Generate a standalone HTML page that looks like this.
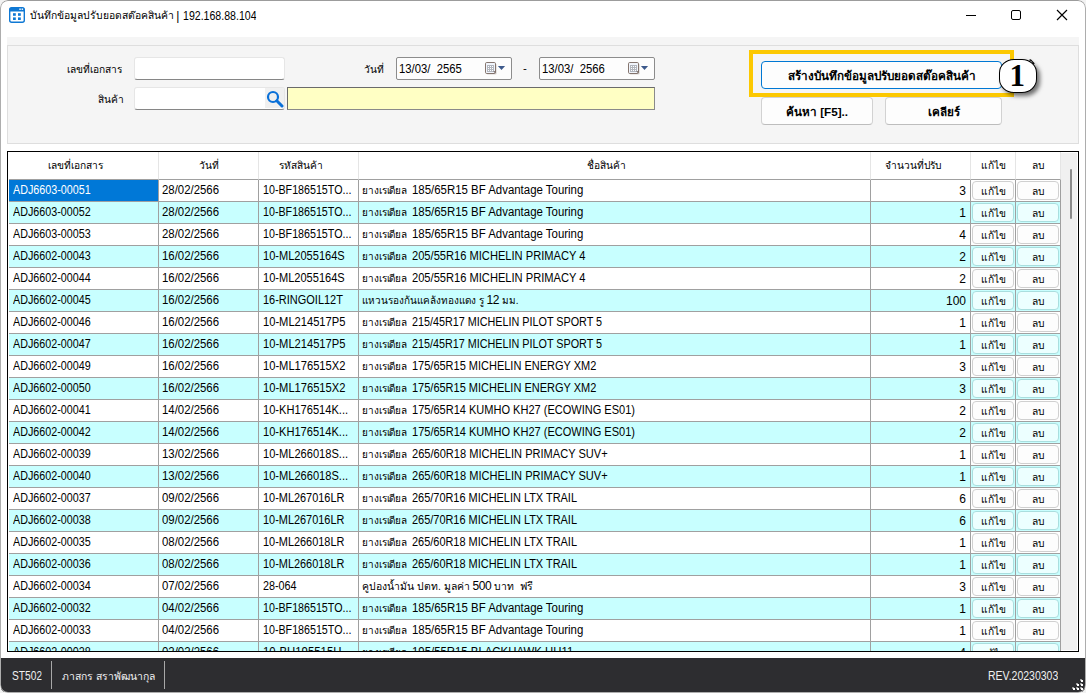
<!DOCTYPE html>
<html lang="th">
<head>
<meta charset="utf-8">
<title>บันทึกข้อมูลปรับยอดสต๊อคสินค้า</title>
<style>
*{box-sizing:border-box;margin:0;padding:0}
html,body{width:1086px;height:693px;overflow:hidden;background:#f2f2f2}
body{font-family:"Liberation Sans",sans-serif;font-size:11.5px;color:#000;position:relative}
.win{position:absolute;left:0;top:0;width:1086px;height:693px;border-radius:8px;background:#fff;overflow:hidden}
.winborder{position:absolute;left:0;top:0;width:1086px;height:693px;border:1px solid #adadad;border-top-color:#9c9c9c;border-radius:8px;pointer-events:none}
.t{position:absolute;white-space:nowrap;line-height:16px;height:16px;overflow:hidden}
.ctl{position:absolute;top:0;left:0}
.panel{position:absolute;left:7px;top:37px;width:1072px;height:107px;background:#f5f5f5}
.gb{position:absolute;left:0;top:8px;width:1072px;height:99px;border:1px solid #dedede}
.lbl{position:absolute;white-space:nowrap;text-align:right;line-height:16px;height:16px;width:70px;overflow:hidden}
.inp{position:absolute;background:#fff;border:1px solid #e6e6e6;border-bottom:1px solid #868686;border-radius:3px}
.dp{position:absolute;background:#fdfdfd;border:1px solid #8c8c8c;border-radius:2px}
.dp span{position:absolute;left:2px;top:3px;line-height:16px;white-space:pre;font-size:12.5px;transform:scaleX(.903);transform-origin:0 50%}
.btn{position:absolute;background:#fdfdfd;border:1px solid #d2d2d2;border-bottom-color:#bdbdbd;border-radius:4px;text-align:center;font-weight:bold;font-size:11.7px;white-space:nowrap;overflow:hidden}
.grid{position:absolute;left:7px;top:151px;width:1072px;height:501px;border:1px solid #000;background:#fff;overflow:hidden}
.hd.po{padding-right:16px}
.hd{position:absolute;top:0;height:28px;border-right:1px solid #e5e5e5;border-bottom:1px solid #a0a0a0;text-align:center;line-height:28px;white-space:nowrap;overflow:hidden}
.sb{position:absolute;left:1053px;top:1px;width:16px;height:497px;background:#f0f0f0}
.thumb{position:absolute;left:9px;top:16px;width:2px;height:50px;background:#8a8a8a;border-radius:1px}
.row{position:absolute;left:1px;width:1052px;height:22px}
.row.alt{background:#c8ffff}
.c{position:absolute;top:0;height:22px;border-right:1px solid #a0a0a0;border-bottom:1px solid #a0a0a0;line-height:20px;white-space:pre;overflow:hidden;padding-left:4px;font-size:12px}
.sx{display:inline-block;transform-origin:0 50%;vertical-align:baseline}
.c1{left:0;width:150px;padding-left:3.5px}
.c2{left:150px;width:100px;padding-left:2.7px}
.c3{left:250px;width:100px;padding-left:3.5px}
.c4{left:350px;width:512px;padding-left:3px}
.c5{left:862px;width:100px;text-align:right;padding-right:4px;line-height:22px}
.c6{left:962px;width:45px;padding:0}
.c7{left:1007px;width:45px;padding:0}
.sel{background:#0078d7;color:#fff}
.th{display:inline-block;width:49.6px;white-space:nowrap;vertical-align:baseline;clip-path:inset(-6px 0 -6px 0)}
.rb{position:absolute;top:1px;height:19px;border:1px solid #d0d0d0;border-radius:4px;background:#fdfdfd;text-align:center;line-height:19px;overflow:hidden}
.alt .rb{background:#ecffff;border-color:#a9dede}
.rb.e{left:1px;width:42px}
.rb.d{left:1px;width:42px}
.status{position:absolute;left:1px;top:658px;width:1084px;height:34px;background:#2d2d30;color:#f0f0f0}
.status .t{top:10px;font-size:12px;transform-origin:0 0}
.sep{position:absolute;top:3px;width:1px;height:28px;background:#a8a8a8}
.k{font-size:10.2px;letter-spacing:0}
.k2{font-size:10px;letter-spacing:-0.1px}
.k3{font-size:10px;letter-spacing:0}
.k4{font-size:10.4px;letter-spacing:0}
.lat{font-size:12px;letter-spacing:-0.5px}
</style>
</head>
<body>
<div class="win">
<svg class="ctl" width="1086" height="36" viewBox="0 0 1086 36">
<rect x="9.7" y="7.7" width="14.6" height="14.6" rx="2" fill="#fff" stroke="#0f78d4" stroke-width="1.4"/>
<path d="M9.5 9.5 a2 2 0 0 1 2-2 h11 a2 2 0 0 1 2 2 v2 h-15z" fill="#0f78d4"/>
<rect x="19.3" y="8.5" width="1.5" height="1.4" fill="#fff"/><rect x="21.6" y="8.5" width="1.5" height="1.4" fill="#fff"/>
<rect x="13" y="13.2" width="2.8" height="2.6" fill="#0f78d4"/><rect x="18" y="13.2" width="2.8" height="2.6" fill="#0f78d4"/>
<rect x="13" y="17.4" width="2.8" height="2.6" fill="#0f78d4"/><rect x="18" y="17.4" width="2.8" height="2.6" fill="#0f78d4"/>
<path d="M966 15.5h10" stroke="#000" stroke-width="1" fill="none"/>
<rect x="1011.5" y="10.5" width="9" height="9" rx="1.5" fill="none" stroke="#000" stroke-width="1"/>
<path d="M1057 10l10 10M1067 10l-10 10" stroke="#000" stroke-width="1.15" fill="none"/>
</svg>
<div class="t k" style="left:30px;top:8px;width:145px;font-size:10.35px">บันทึกข้อมูลปรับยอดสต๊อคสินค้า</div>
<div class="t" style="left:176.3px;top:8px;font-size:12px">|</div>
<div class="t" style="left:182.6px;top:8px;font-size:12px;transform:scaleX(.882);transform-origin:0 50%">192.168.88.104</div>

<div class="panel"><div class="gb"></div></div>
<div class="lbl k" style="left:52px;top:62px">เลขที่เอกสาร</div>
<div class="lbl k" style="left:54px;top:92px">สินค้า</div>
<div class="lbl k" style="left:314px;top:62px">วันที่</div>
<div class="inp" style="left:134px;top:57px;width:151px;height:23px"></div>
<div class="inp" style="left:134px;top:87px;width:151px;height:23px"></div>
<div style="position:absolute;left:265px;top:88px;width:19px;height:20px;background:#f0f0f0"></div>
<svg style="position:absolute;left:266px;top:90px" width="18" height="18" viewBox="0 0 18 18"><circle cx="7" cy="7" r="5" fill="none" stroke="#0a70d8" stroke-width="2.2"/><path d="M10.8 10.8L16 16" stroke="#0a70d8" stroke-width="3" stroke-linecap="round"/></svg>
<div style="position:absolute;left:287px;top:87px;width:368px;height:23px;background:#ffffc4;border:1px solid #8a8a8a;border-top-color:#6a6a6a;border-left-color:#6a6a6a"></div>
<div class="dp" style="left:396px;top:57px;width:116px;height:23px"><span>13/03/  2565</span></div>
<div class="dp" style="left:539px;top:57px;width:116px;height:23px"><span>13/03/  2566</span></div>
<div class="t" style="left:523px;top:60px">-</div>
<svg style="position:absolute;left:485px;top:62px" width="21" height="13" viewBox="0 0 21 13"><rect x="1.6" y="1.8" width="10" height="10.6" rx="1.2" fill="#d9d6d4"/><rect x=".5" y=".5" width="10" height="11" rx="1.2" fill="#f1f5fc" stroke="#78675f" stroke-width=".9"/><rect x="2" y="3" width="7" height="7" fill="#b3b7bf"/><path d="M3 4h1v1h-1zM5 4h1v1h-1zM7 4h1v1h-1zM3 6h1v1h-1zM5 6h1v1h-1zM7 6h1v1h-1zM3 8h1v1h-1zM5 8h1v1h-1zM7 8h1v1h-1z" fill="#fff"/><path d="M8.2 9.2h2v2z" fill="#6a5a55"/><path d="M12.9 4h7.2l-3.6 4.1z" fill="#3d5a8c"/></svg>
<svg style="position:absolute;left:628px;top:62px" width="21" height="13" viewBox="0 0 21 13"><rect x="1.6" y="1.8" width="10" height="10.6" rx="1.2" fill="#d9d6d4"/><rect x=".5" y=".5" width="10" height="11" rx="1.2" fill="#f1f5fc" stroke="#78675f" stroke-width=".9"/><rect x="2" y="3" width="7" height="7" fill="#b3b7bf"/><path d="M3 4h1v1h-1zM5 4h1v1h-1zM7 4h1v1h-1zM3 6h1v1h-1zM5 6h1v1h-1zM7 6h1v1h-1zM3 8h1v1h-1zM5 8h1v1h-1zM7 8h1v1h-1z" fill="#fff"/><path d="M8.2 9.2h2v2z" fill="#6a5a55"/><path d="M12.9 4h7.2l-3.6 4.1z" fill="#3d5a8c"/></svg>
<div style="position:absolute;left:749px;top:50px;width:265px;height:47px;border:4px solid #fcc800"></div>
<div class="btn" style="left:761px;top:61px;width:241px;height:28px;line-height:27px;border-color:#0078d4">สร้างบันทึกข้อมูลปรับยอดสต๊อคสินค้า</div>
<div class="btn" style="left:761px;top:97px;width:112px;height:28px;line-height:27px">ค้นหา [F5]..</div>
<div class="btn" style="left:885px;top:97px;width:117px;height:28px;line-height:27px">เคลียร์</div>
<div style="position:absolute;left:999px;top:59px;width:38px;height:34px;border:1.4px solid #000;border-radius:15px/14px;background:#fff;box-shadow:3px 3px 4px rgba(0,0,0,.55);font-family:'Liberation Serif',serif;font-weight:bold;font-size:31px;line-height:32px;text-align:center;text-indent:-1.5px">1</div>
<svg style="position:absolute;left:1026px;top:57px" width="12" height="10" viewBox="0 0 12 10"><path d="M2.6 2.9 L4.8 2.2 L8.8 6.6 L7.4 7.2 L5.4 4.2z" fill="#000"/></svg>

<div class="grid">
<div class="hd k po" style="left:1px;width:150px">เลขที่เอกสาร</div>
<div class="hd k h2" style="left:151px;width:100px">วันที่</div>
<div class="hd k po" style="left:251px;width:100px">รหัสสินค้า</div>
<div class="hd k po" style="left:351px;width:512px">ชื่อสินค้า</div>
<div class="hd k po" style="left:863px;width:100px">จำนวนที่ปรับ</div>
<div class="hd k h6" style="left:963px;width:45px">แก้ไข</div>
<div class="hd k h7" style="left:1008px;width:45px">ลบ</div>
<div class="sb"><div class="thumb"></div></div>
<div class="row" style="top:28px"><div class="c c1 sel"><span class="sx" style="transform:scaleX(0.8947)">ADJ6603-00051</span></div><div class="c c2"><span class="sx" style="transform:scaleX(0.9491)">28/02/2566</span></div><div class="c c3"><span class="sx" style="transform:scaleX(0.8914)">10-BF186515TO...</span></div><div class="c c4"><span class="th k2">ยางเรเดียล</span><span class="sx" style="transform:scaleX(0.9521)">185/65R15 BF Advantage Touring</span></div><div class="c c5">3</div><div class="c c6"><div class="rb e k">แก้ไข</div></div><div class="c c7"><div class="rb d k">ลบ</div></div></div>
<div class="row alt" style="top:50px"><div class="c c1"><span class="sx" style="transform:scaleX(0.8947)">ADJ6603-00052</span></div><div class="c c2"><span class="sx" style="transform:scaleX(0.9491)">28/02/2566</span></div><div class="c c3"><span class="sx" style="transform:scaleX(0.8914)">10-BF186515TO...</span></div><div class="c c4"><span class="th k2">ยางเรเดียล</span><span class="sx" style="transform:scaleX(0.9521)">185/65R15 BF Advantage Touring</span></div><div class="c c5">1</div><div class="c c6"><div class="rb e k">แก้ไข</div></div><div class="c c7"><div class="rb d k">ลบ</div></div></div>
<div class="row" style="top:72px"><div class="c c1"><span class="sx" style="transform:scaleX(0.8947)">ADJ6603-00053</span></div><div class="c c2"><span class="sx" style="transform:scaleX(0.9491)">28/02/2566</span></div><div class="c c3"><span class="sx" style="transform:scaleX(0.8914)">10-BF186515TO...</span></div><div class="c c4"><span class="th k2">ยางเรเดียล</span><span class="sx" style="transform:scaleX(0.9521)">185/65R15 BF Advantage Touring</span></div><div class="c c5">4</div><div class="c c6"><div class="rb e k">แก้ไข</div></div><div class="c c7"><div class="rb d k">ลบ</div></div></div>
<div class="row alt" style="top:94px"><div class="c c1"><span class="sx" style="transform:scaleX(0.8947)">ADJ6602-00043</span></div><div class="c c2"><span class="sx" style="transform:scaleX(0.9491)">16/02/2566</span></div><div class="c c3"><span class="sx" style="transform:scaleX(0.9207)">10-ML2055164S</span></div><div class="c c4"><span class="th k2">ยางเรเดียล</span><span class="sx" style="transform:scaleX(0.9268)">205/55R16 MICHELIN PRIMACY 4</span></div><div class="c c5">2</div><div class="c c6"><div class="rb e k">แก้ไข</div></div><div class="c c7"><div class="rb d k">ลบ</div></div></div>
<div class="row" style="top:116px"><div class="c c1"><span class="sx" style="transform:scaleX(0.8947)">ADJ6602-00044</span></div><div class="c c2"><span class="sx" style="transform:scaleX(0.9491)">16/02/2566</span></div><div class="c c3"><span class="sx" style="transform:scaleX(0.9207)">10-ML2055164S</span></div><div class="c c4"><span class="th k2">ยางเรเดียล</span><span class="sx" style="transform:scaleX(0.9268)">205/55R16 MICHELIN PRIMACY 4</span></div><div class="c c5">2</div><div class="c c6"><div class="rb e k">แก้ไข</div></div><div class="c c7"><div class="rb d k">ลบ</div></div></div>
<div class="row alt" style="top:138px"><div class="c c1"><span class="sx" style="transform:scaleX(0.8947)">ADJ6602-00045</span></div><div class="c c2"><span class="sx" style="transform:scaleX(0.9491)">16/02/2566</span></div><div class="c c3"><span class="sx" style="transform:scaleX(0.9146)">16-RINGOIL12T</span></div><div class="c c4 k3">แหวนรองก้นแคล้งทองแดง รู <span class="lat">12</span> มม.</div><div class="c c5">100</div><div class="c c6"><div class="rb e k">แก้ไข</div></div><div class="c c7"><div class="rb d k">ลบ</div></div></div>
<div class="row" style="top:160px"><div class="c c1"><span class="sx" style="transform:scaleX(0.8947)">ADJ6602-00046</span></div><div class="c c2"><span class="sx" style="transform:scaleX(0.9491)">16/02/2566</span></div><div class="c c3"><span class="sx" style="transform:scaleX(0.9286)">10-ML214517P5</span></div><div class="c c4"><span class="th k2">ยางเรเดียล</span><span class="sx" style="transform:scaleX(0.8991)">215/45R17 MICHELIN PILOT SPORT 5</span></div><div class="c c5">1</div><div class="c c6"><div class="rb e k">แก้ไข</div></div><div class="c c7"><div class="rb d k">ลบ</div></div></div>
<div class="row alt" style="top:182px"><div class="c c1"><span class="sx" style="transform:scaleX(0.8947)">ADJ6602-00047</span></div><div class="c c2"><span class="sx" style="transform:scaleX(0.9491)">16/02/2566</span></div><div class="c c3"><span class="sx" style="transform:scaleX(0.9286)">10-ML214517P5</span></div><div class="c c4"><span class="th k2">ยางเรเดียล</span><span class="sx" style="transform:scaleX(0.8991)">215/45R17 MICHELIN PILOT SPORT 5</span></div><div class="c c5">1</div><div class="c c6"><div class="rb e k">แก้ไข</div></div><div class="c c7"><div class="rb d k">ลบ</div></div></div>
<div class="row" style="top:204px"><div class="c c1"><span class="sx" style="transform:scaleX(0.8947)">ADJ6602-00049</span></div><div class="c c2"><span class="sx" style="transform:scaleX(0.9491)">16/02/2566</span></div><div class="c c3"><span class="sx" style="transform:scaleX(0.9286)">10-ML176515X2</span></div><div class="c c4"><span class="th k2">ยางเรเดียล</span><span class="sx" style="transform:scaleX(0.9160)">175/65R15 MICHELIN ENERGY XM2</span></div><div class="c c5">3</div><div class="c c6"><div class="rb e k">แก้ไข</div></div><div class="c c7"><div class="rb d k">ลบ</div></div></div>
<div class="row alt" style="top:226px"><div class="c c1"><span class="sx" style="transform:scaleX(0.8947)">ADJ6602-00050</span></div><div class="c c2"><span class="sx" style="transform:scaleX(0.9491)">16/02/2566</span></div><div class="c c3"><span class="sx" style="transform:scaleX(0.9286)">10-ML176515X2</span></div><div class="c c4"><span class="th k2">ยางเรเดียล</span><span class="sx" style="transform:scaleX(0.9160)">175/65R15 MICHELIN ENERGY XM2</span></div><div class="c c5">3</div><div class="c c6"><div class="rb e k">แก้ไข</div></div><div class="c c7"><div class="rb d k">ลบ</div></div></div>
<div class="row" style="top:248px"><div class="c c1"><span class="sx" style="transform:scaleX(0.8947)">ADJ6602-00041</span></div><div class="c c2"><span class="sx" style="transform:scaleX(0.9491)">14/02/2566</span></div><div class="c c3"><span class="sx" style="transform:scaleX(0.9243)">10-KH176514K...</span></div><div class="c c4"><span class="th k2">ยางเรเดียล</span><span class="sx" style="transform:scaleX(0.9186)">175/65R14 KUMHO KH27 (ECOWING ES01)</span></div><div class="c c5">2</div><div class="c c6"><div class="rb e k">แก้ไข</div></div><div class="c c7"><div class="rb d k">ลบ</div></div></div>
<div class="row alt" style="top:270px"><div class="c c1"><span class="sx" style="transform:scaleX(0.8947)">ADJ6602-00042</span></div><div class="c c2"><span class="sx" style="transform:scaleX(0.9491)">14/02/2566</span></div><div class="c c3"><span class="sx" style="transform:scaleX(0.9243)">10-KH176514K...</span></div><div class="c c4"><span class="th k2">ยางเรเดียล</span><span class="sx" style="transform:scaleX(0.9186)">175/65R14 KUMHO KH27 (ECOWING ES01)</span></div><div class="c c5">2</div><div class="c c6"><div class="rb e k">แก้ไข</div></div><div class="c c7"><div class="rb d k">ลบ</div></div></div>
<div class="row" style="top:292px"><div class="c c1"><span class="sx" style="transform:scaleX(0.8947)">ADJ6602-00039</span></div><div class="c c2"><span class="sx" style="transform:scaleX(0.9491)">13/02/2566</span></div><div class="c c3"><span class="sx" style="transform:scaleX(0.9243)">10-ML266018S...</span></div><div class="c c4"><span class="th k2">ยางเรเดียล</span><span class="sx" style="transform:scaleX(0.9218)">265/60R18 MICHELIN PRIMACY SUV+</span></div><div class="c c5">1</div><div class="c c6"><div class="rb e k">แก้ไข</div></div><div class="c c7"><div class="rb d k">ลบ</div></div></div>
<div class="row alt" style="top:314px"><div class="c c1"><span class="sx" style="transform:scaleX(0.8947)">ADJ6602-00040</span></div><div class="c c2"><span class="sx" style="transform:scaleX(0.9491)">13/02/2566</span></div><div class="c c3"><span class="sx" style="transform:scaleX(0.9243)">10-ML266018S...</span></div><div class="c c4"><span class="th k2">ยางเรเดียล</span><span class="sx" style="transform:scaleX(0.9218)">265/60R18 MICHELIN PRIMACY SUV+</span></div><div class="c c5">1</div><div class="c c6"><div class="rb e k">แก้ไข</div></div><div class="c c7"><div class="rb d k">ลบ</div></div></div>
<div class="row" style="top:336px"><div class="c c1"><span class="sx" style="transform:scaleX(0.8947)">ADJ6602-00037</span></div><div class="c c2"><span class="sx" style="transform:scaleX(0.9491)">09/02/2566</span></div><div class="c c3"><span class="sx" style="transform:scaleX(0.9105)">10-ML267016LR</span></div><div class="c c4"><span class="th k2">ยางเรเดียล</span><span class="sx" style="transform:scaleX(0.9117)">265/70R16 MICHELIN LTX TRAIL</span></div><div class="c c5">6</div><div class="c c6"><div class="rb e k">แก้ไข</div></div><div class="c c7"><div class="rb d k">ลบ</div></div></div>
<div class="row alt" style="top:358px"><div class="c c1"><span class="sx" style="transform:scaleX(0.8947)">ADJ6602-00038</span></div><div class="c c2"><span class="sx" style="transform:scaleX(0.9491)">09/02/2566</span></div><div class="c c3"><span class="sx" style="transform:scaleX(0.9105)">10-ML267016LR</span></div><div class="c c4"><span class="th k2">ยางเรเดียล</span><span class="sx" style="transform:scaleX(0.9117)">265/70R16 MICHELIN LTX TRAIL</span></div><div class="c c5">6</div><div class="c c6"><div class="rb e k">แก้ไข</div></div><div class="c c7"><div class="rb d k">ลบ</div></div></div>
<div class="row" style="top:380px"><div class="c c1"><span class="sx" style="transform:scaleX(0.8947)">ADJ6602-00035</span></div><div class="c c2"><span class="sx" style="transform:scaleX(0.9491)">08/02/2566</span></div><div class="c c3"><span class="sx" style="transform:scaleX(0.9105)">10-ML266018LR</span></div><div class="c c4"><span class="th k2">ยางเรเดียล</span><span class="sx" style="transform:scaleX(0.9117)">265/60R18 MICHELIN LTX TRAIL</span></div><div class="c c5">1</div><div class="c c6"><div class="rb e k">แก้ไข</div></div><div class="c c7"><div class="rb d k">ลบ</div></div></div>
<div class="row alt" style="top:402px"><div class="c c1"><span class="sx" style="transform:scaleX(0.8947)">ADJ6602-00036</span></div><div class="c c2"><span class="sx" style="transform:scaleX(0.9491)">08/02/2566</span></div><div class="c c3"><span class="sx" style="transform:scaleX(0.9105)">10-ML266018LR</span></div><div class="c c4"><span class="th k2">ยางเรเดียล</span><span class="sx" style="transform:scaleX(0.9117)">265/60R18 MICHELIN LTX TRAIL</span></div><div class="c c5">1</div><div class="c c6"><div class="rb e k">แก้ไข</div></div><div class="c c7"><div class="rb d k">ลบ</div></div></div>
<div class="row" style="top:424px"><div class="c c1"><span class="sx" style="transform:scaleX(0.8947)">ADJ6602-00034</span></div><div class="c c2"><span class="sx" style="transform:scaleX(0.9491)">07/02/2566</span></div><div class="c c3"><span class="sx" style="transform:scaleX(0.8992)">28-064</span></div><div class="c c4 k4">คูปองน้ำมัน ปตท. มูลค่า <span class="lat">500</span> บาท  ฟรี</div><div class="c c5">3</div><div class="c c6"><div class="rb e k">แก้ไข</div></div><div class="c c7"><div class="rb d k">ลบ</div></div></div>
<div class="row alt" style="top:446px"><div class="c c1"><span class="sx" style="transform:scaleX(0.8947)">ADJ6602-00032</span></div><div class="c c2"><span class="sx" style="transform:scaleX(0.9491)">04/02/2566</span></div><div class="c c3"><span class="sx" style="transform:scaleX(0.8914)">10-BF186515TO...</span></div><div class="c c4"><span class="th k2">ยางเรเดียล</span><span class="sx" style="transform:scaleX(0.9521)">185/65R15 BF Advantage Touring</span></div><div class="c c5">1</div><div class="c c6"><div class="rb e k">แก้ไข</div></div><div class="c c7"><div class="rb d k">ลบ</div></div></div>
<div class="row" style="top:468px"><div class="c c1"><span class="sx" style="transform:scaleX(0.8947)">ADJ6602-00033</span></div><div class="c c2"><span class="sx" style="transform:scaleX(0.9491)">04/02/2566</span></div><div class="c c3"><span class="sx" style="transform:scaleX(0.8914)">10-BF186515TO...</span></div><div class="c c4"><span class="th k2">ยางเรเดียล</span><span class="sx" style="transform:scaleX(0.9521)">185/65R15 BF Advantage Touring</span></div><div class="c c5">1</div><div class="c c6"><div class="rb e k">แก้ไข</div></div><div class="c c7"><div class="rb d k">ลบ</div></div></div>
<div class="row alt" style="top:490px"><div class="c c1"><span class="sx" style="transform:scaleX(0.8947)">ADJ6602-00028</span></div><div class="c c2"><span class="sx" style="transform:scaleX(0.9491)">02/02/2566</span></div><div class="c c3"><span class="sx" style="transform:scaleX(0.9490)">10-BH195515H...</span></div><div class="c c4"><span class="th k2">ยางเรเดียล</span><span class="sx" style="transform:scaleX(0.9483)">195/55R15 BLACKHAWK HH11</span></div><div class="c c5">4</div><div class="c c6"><div class="rb e k">แก้ไข</div></div><div class="c c7"><div class="rb d k">ลบ</div></div></div>
</div>
<div class="status">
<div class="t" style="left:11px;transform:scaleX(.85)">ST502</div>
<div class="sep" style="left:50px"></div>
<div class="t k" style="left:61px;top:11px;width:98px;font-size:10.4px">ภาสกร สราพัฒนากุล</div>
<div class="sep" style="left:163px"></div>
<div class="t" style="left:987px;transform:scaleX(.875)">REV.20230303</div>
<svg style="position:absolute;left:1069px;top:20px" width="15" height="14" viewBox="0 0 15 14"><path d="M10 1h2v2h-2zM6 5h2v2h-2zM10 5h2v2h-2zM2 9h2v2h-2zM6 9h2v2h-2zM10 9h2v2h-2z" fill="#9a9a9a"/><path d="M11 2h2v2h-2zM7 6h2v2h-2zM11 6h2v2h-2zM3 10h2v2h-2zM7 10h2v2h-2zM11 10h2v2h-2z" fill="#fff"/></svg>
</div>

<div class="winborder"></div>
</div>
</body>
</html>
